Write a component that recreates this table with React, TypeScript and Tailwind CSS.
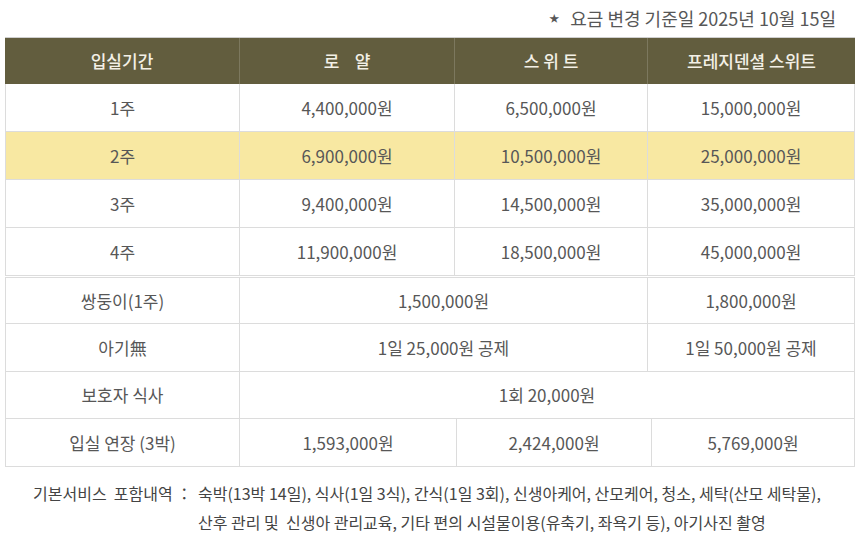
import React from "react";

const font = { fontFamily: '"Noto Sans CJK KR", "Noto Sans", sans-serif' };

const cell = "flex items-center justify-center border-r border-b border-[#dcdcdc] text-[17px] text-[#575757]";

const weeks = [
  { label: "1주", royal: "4,400,000원", suite: "6,500,000원", pres: "15,000,000원", hl: false },
  { label: "2주", royal: "6,900,000원", suite: "10,500,000원", pres: "25,000,000원", hl: true },
  { label: "3주", royal: "9,400,000원", suite: "14,500,000원", pres: "35,000,000원", hl: false },
  { label: "4주", royal: "11,900,000원", suite: "18,500,000원", pres: "45,000,000원", hl: false },
];

const App: React.FC = () => {
  return (
    <div className="w-[860px] h-[535px] bg-white overflow-hidden" style={font}>
      {/* notice */}
      <div className="h-[37px] flex items-center justify-end pr-[24px] text-[18px] text-[#575757]">
        <span className="text-[10px] mr-[11px] relative top-[-1px]">★</span>
        요금 변경 기준일 2025년 10월 15일
      </div>

      <div className="mx-[5px] w-[850px]">
        {/* header */}
        <div className="grid grid-cols-[235px_215px_193px_207px] h-[47px] bg-[#625d3e] text-[#f3f0e6] text-[17px] font-medium border-t border-[#cfcfcf]">
          <div className="flex items-center justify-center border-r border-[#7c785e]">입실기간</div>
          <div className="flex items-center justify-center border-r border-[#7c785e] whitespace-pre">로    얄</div>
          <div className="flex items-center justify-center border-r border-[#7c785e] whitespace-pre">스 위 트</div>
          <div className="flex items-center justify-center">프레지덴셜 스위트</div>
        </div>

        {/* weekly prices */}
        <div className="border-l border-[#dcdcdc]">
          {weeks.map((w) => (
            <div
              key={w.label}
              className={`grid grid-cols-[234px_215px_193px_207px] h-[48px] ${w.hl ? "bg-[#f8e8a2]" : "bg-white"}`}
            >
              <div className={cell}>{w.label}</div>
              <div className={cell}>{w.royal}</div>
              <div className={cell}>{w.suite}</div>
              <div className={cell}>{w.pres}</div>
            </div>
          ))}
        </div>

        {/* extras */}
        <div className="mt-[1px] border-l border-t border-[#dcdcdc]">
          <div className="grid grid-cols-[234px_408px_207px] h-[46px]">
            <div className={cell}>쌍둥이(1주)</div>
            <div className={cell}>1,500,000원</div>
            <div className={cell}>1,800,000원</div>
          </div>
          <div className="grid grid-cols-[234px_408px_207px] h-[48px]">
            <div className={cell}>아기無</div>
            <div className={cell}>1일 25,000원 공제</div>
            <div className={cell}>1일 50,000원 공제</div>
          </div>
          <div className="grid grid-cols-[234px_615px] h-[47px]">
            <div className={cell}>보호자 식사</div>
            <div className={cell}>1회 20,000원</div>
          </div>
          <div className="grid grid-cols-[234px_217px_195px_203px] h-[48px]">
            <div className={cell}>입실 연장 (3박)</div>
            <div className={cell}>1,593,000원</div>
            <div className={cell}>2,424,000원</div>
            <div className={cell}>5,769,000원</div>
          </div>
        </div>
      </div>

      {/* footer */}
      <div className="mt-[12px] flex text-[16px] leading-[29px] text-[#444]">
        <div className="w-[198px] shrink-0 pl-[33px] whitespace-pre">기본서비스  포함내역 ：</div>
        <div>
          숙박(13박 14일), 식사(1일 3식), 간식(1일 3회), 신생아케어, 산모케어, 청소, 세탁(산모 세탁물),
          <br />
          산후 관리 및 &nbsp;신생아 관리교육, 기타 편의 시설물이용(유축기, 좌욕기 등), 아기사진 촬영
        </div>
      </div>
    </div>
  );
};

export default App;
